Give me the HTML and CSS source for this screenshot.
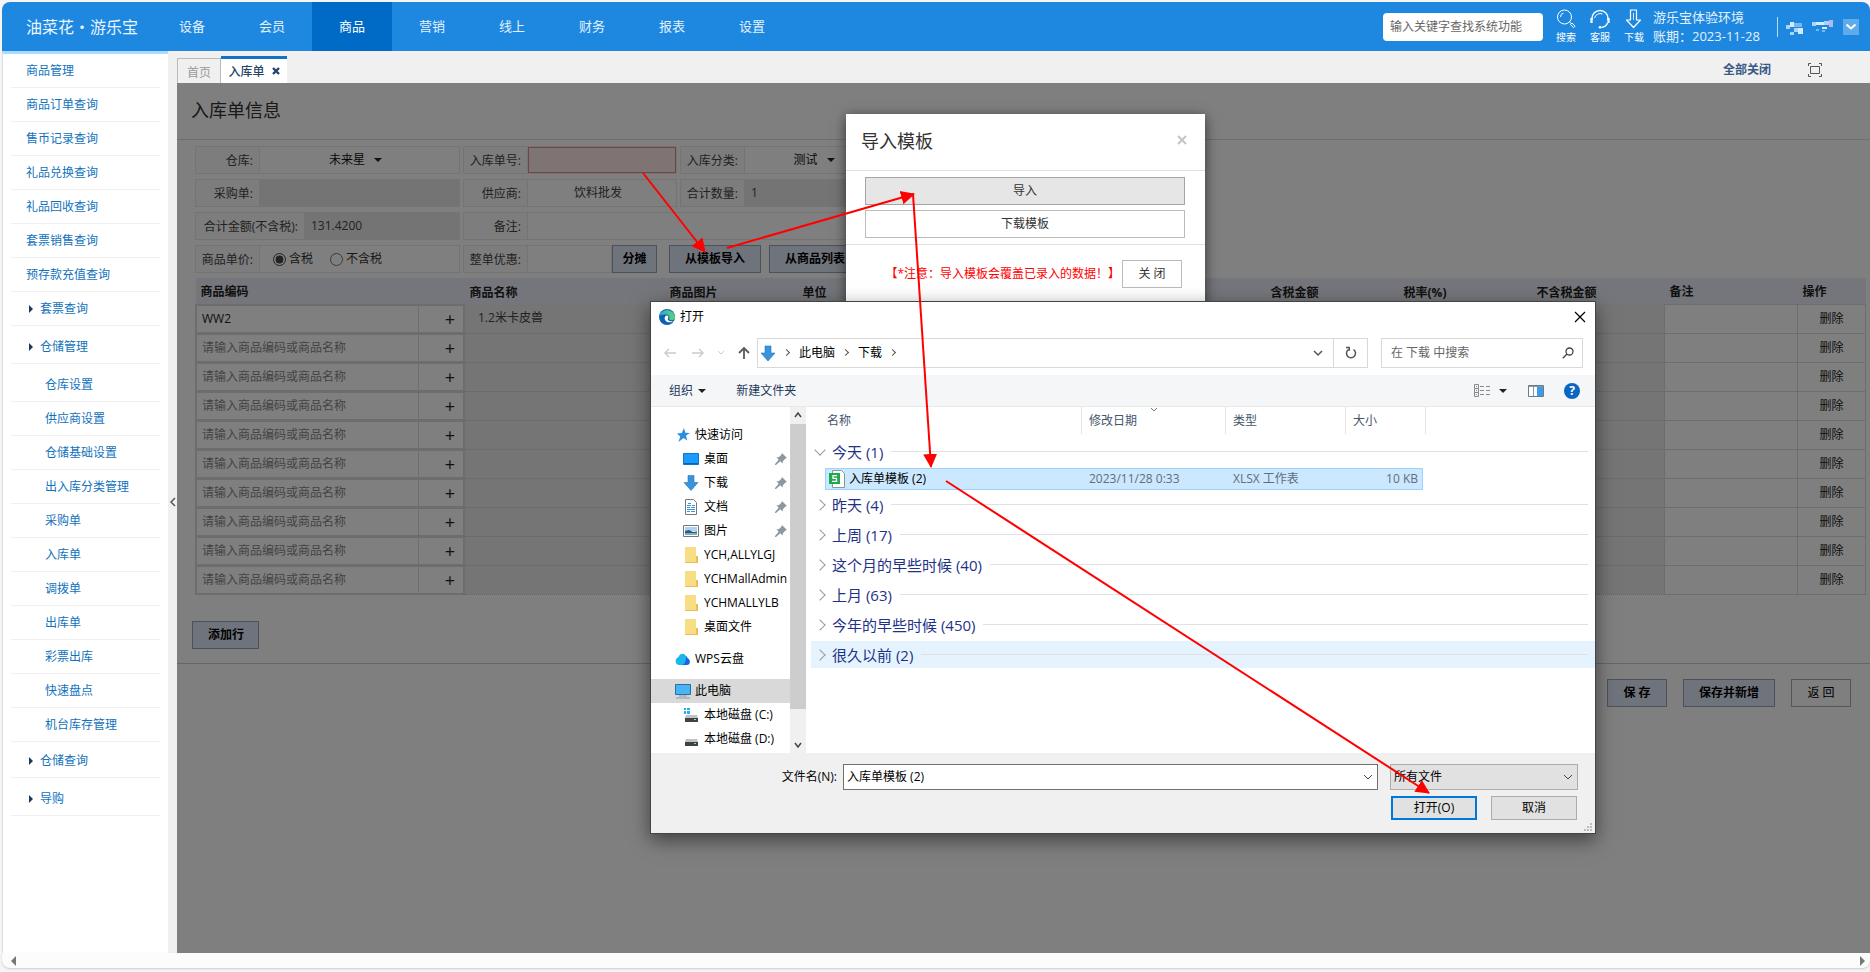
FILE: index.html
```html
<!DOCTYPE html>
<html lang="zh-CN">
<head>
<meta charset="utf-8">
<title>入库单</title>
<link rel="stylesheet" href="styles.css">
</head>
<body>
<div class="app">
  <header class="topbar">
    <div class="brand">油菜花・游乐宝</div>
    <nav class="nav">
      <a href="#">设备</a><a href="#">会员</a><a href="#" class="on">商品</a><a href="#">营销</a><a href="#">线上</a><a href="#">财务</a><a href="#">报表</a><a href="#">设置</a>
    </nav>
    <input class="top-search" type="text" placeholder="输入关键字查找系统功能" aria-label="查找系统功能">
    <div class="tools">
      <button class="tool"><svg width="20" height="20" viewBox="0 0 20 20" fill="none" stroke="#fff"><circle cx="8.5" cy="8" r="7"/><path d="M4.5 8a4 4 0 0 1 3-4"/><path d="M13.5 13l1.5 1.2M14.5 15.5l1.5-1.5 3 3.2-1.5 1.5z"/></svg>搜索</button>
      <button class="tool"><svg width="20" height="20" viewBox="0 0 20 20" fill="none" stroke="#fff" stroke-width="1.4"><path d="M2 11V9.500a8 8 0 0 1 16 0V11"/><path d="M4.500 9a6 6 0 0 1 8-4" stroke-width="1"/><path d="M1.500 9v5M18.500 9v5" stroke-width="2.200"/><path d="M17.500 14c-1 3-3 4-6 4.500"/><circle cx="10" cy="18.200" r="1.300" fill="#fff" stroke="none"/></svg>客服</button>
      <button class="tool"><svg width="20" height="20" viewBox="0 0 20 20" fill="none" stroke="#fff" stroke-width="1.200"><path d="M6.500 1h6v10h4l-7 7.500-7-7.500h4z" stroke-linejoin="round"/><path d="M9.500 4v7" stroke-width=".8"/></svg>下载</button>
    </div>
    <div class="env"><div>游乐宝体验环境</div><div>账期：2023-11-28</div></div>
    <div class="account">
      <svg width="48" height="18" viewBox="0 0 48 18"><path fill="#a9d5fb" d="M0 7h4v4H0zM8 10h4v4H8zM4 14h4v3H4zM26 4h4v4h-4zM38 3h5v4h-5z"/><path fill="#d6e9fd" d="M4 4h4v5H4zM12 10h5v6h-5zM30 4h8v3h-8zM36 9h5v2h-5z"/><path fill="#74b8f4" d="M8 5h4v4H8zM12 5h4v4h-4zM30 11h3v2h-3zM36 12h3v2h-3z"/><path fill="#b7b5ee" d="M43 2h4v7h-4z"/></svg>
      <button class="more" aria-label="更多"><svg width="16" height="16" viewBox="0 0 16 16" fill="none" stroke="#fff" stroke-width="2"><path d="M3.500 5.500l4.500 4 4.500-4"/></svg></button>
    </div>
  </header>

  <div class="body">
    <aside class="side">
      <a href="#">商品管理</a>
      <a href="#">商品订单查询</a>
      <a href="#">售币记录查询</a>
      <a href="#">礼品兑换查询</a>
      <a href="#">礼品回收查询</a>
      <a href="#">套票销售查询</a>
      <a href="#">预存款充值查询</a>
      <a href="#" class="grp">套票查询</a>
      <a href="#" class="grp gap">仓储管理</a>
      <div class="sub">
        <a href="#" class="gap">仓库设置</a>
        <a href="#">供应商设置</a>
        <a href="#">仓储基础设置</a>
        <a href="#">出入库分类管理</a>
        <a href="#">采购单</a>
        <a href="#">入库单</a>
        <a href="#">调拨单</a>
        <a href="#">出库单</a>
        <a href="#">彩票出库</a>
        <a href="#">快速盘点</a>
        <a href="#">机台库存管理</a>
      </div>
      <a href="#" class="grp">仓储查询</a>
      <a href="#" class="grp gap">导购</a>
    </aside>
    <div class="gutter"><svg width="6" height="10" viewBox="0 0 6 10" fill="none" stroke="#555" stroke-width="1.500"><path d="M5 1L1 5l4 4"/></svg></div>
    <main class="main">
      <div class="tabs">
        <a href="#" class="tab">首页</a>
        <a href="#" class="tab cur">入库单<svg width="8" height="8" viewBox="0 0 8 8" stroke="#25436b" stroke-width="2.400"><path d="M1 1l6 6M7 1L1 7"/></svg></a>
        <a href="#" class="closeall">全部关闭</a>
        <button class="full" aria-label="全屏"><svg width="14" height="14" viewBox="0 0 14 14" fill="none" stroke="#555"><path d="M2.500 3.500h9v7h-9zM.5 3V.5H3M11 .5h2.500V3M.5 11v2.500H3M11 13.500h2.500V11"/></svg></button>
      </div>
      <div class="content">
        <h1>入库单信息</h1>
        <form class="form">
          <div class="fields">
            <div class="f"><label for="wh">仓库:</label><div class="pick"><select id="wh"><option>未来星</option></select><i class="caret"></i></div></div>
            <div class="f"><label for="no">入库单号:</label><input id="no" class="bad" type="text"></div>
            <div class="f"><label for="cat">入库分类:</label><div class="pick"><select id="cat"><option>测试</option></select><i class="caret"></i></div></div>
            <div class="f"><label for="po">采购单:</label><input id="po" type="text" readonly></div>
            <div class="f"><label for="sup">供应商:</label><input id="sup" class="mid" type="text" value="饮料批发"></div>
            <div class="f"><label for="qty">合计数量:</label><input id="qty" type="text" value="1" readonly></div>
            <div class="f"><label for="amt" class="wide">合计金额(不含税):</label><input id="amt" type="text" value="131.4200" readonly></div>
            <div class="f span"><label for="memo">备注:</label><input id="memo" type="text"></div>
            <div class="f"><label for="tax1">商品单价:</label><div class="radios"><label><input id="tax1" type="radio" name="tax" checked>含税</label><label><input type="radio" name="tax">不含税</label></div></div>
            <div class="f span plain"><div class="f disc"><label for="disc">整单优惠:</label><input id="disc" type="text"></div><button type="button" class="btn share">分摊</button><button type="button" class="btn tpl">从模板导入</button><button type="button" class="btn list">从商品列表</button></div>
          </div>
          <table class="grid">
            <colgroup><col class="c-code"><col class="c-name"><col class="c-std"><col class="c-std"><col><col class="c-std"><col class="c-std"><col class="c-std"><col class="c-std"><col class="c-op"></colgroup>
            <thead><tr><th>商品编码</th><th>商品名称</th><th>商品图片</th><th>单位</th><th></th><th>含税金额</th><th>税率(%)</th><th>不含税金额</th><th>备注</th><th>操作</th></tr></thead>
            <tbody>
              <tr><td><div class="code"><input type="text" value="WW2" aria-label="商品编码"><button type="button">+</button></div></td><td class="ro">1.2米卡皮兽</td><td class="ro"></td><td class="ro"></td><td class="ro"></td><td class="ro"></td><td class="ro"></td><td class="ro"></td><td></td><td><a href="#">删除</a></td></tr>
              <tr><td><div class="code"><input type="text" placeholder="请输入商品编码或商品名称" aria-label="商品编码"><button type="button">+</button></div></td><td class="ro"></td><td class="ro"></td><td class="ro"></td><td class="ro"></td><td class="ro"></td><td class="ro"></td><td class="ro"></td><td></td><td><a href="#">删除</a></td></tr>
              <tr><td><div class="code"><input type="text" placeholder="请输入商品编码或商品名称" aria-label="商品编码"><button type="button">+</button></div></td><td class="ro"></td><td class="ro"></td><td class="ro"></td><td class="ro"></td><td class="ro"></td><td class="ro"></td><td class="ro"></td><td></td><td><a href="#">删除</a></td></tr>
              <tr><td><div class="code"><input type="text" placeholder="请输入商品编码或商品名称" aria-label="商品编码"><button type="button">+</button></div></td><td class="ro"></td><td class="ro"></td><td class="ro"></td><td class="ro"></td><td class="ro"></td><td class="ro"></td><td class="ro"></td><td></td><td><a href="#">删除</a></td></tr>
              <tr><td><div class="code"><input type="text" placeholder="请输入商品编码或商品名称" aria-label="商品编码"><button type="button">+</button></div></td><td class="ro"></td><td class="ro"></td><td class="ro"></td><td class="ro"></td><td class="ro"></td><td class="ro"></td><td class="ro"></td><td></td><td><a href="#">删除</a></td></tr>
              <tr><td><div class="code"><input type="text" placeholder="请输入商品编码或商品名称" aria-label="商品编码"><button type="button">+</button></div></td><td class="ro"></td><td class="ro"></td><td class="ro"></td><td class="ro"></td><td class="ro"></td><td class="ro"></td><td class="ro"></td><td></td><td><a href="#">删除</a></td></tr>
              <tr><td><div class="code"><input type="text" placeholder="请输入商品编码或商品名称" aria-label="商品编码"><button type="button">+</button></div></td><td class="ro"></td><td class="ro"></td><td class="ro"></td><td class="ro"></td><td class="ro"></td><td class="ro"></td><td class="ro"></td><td></td><td><a href="#">删除</a></td></tr>
              <tr><td><div class="code"><input type="text" placeholder="请输入商品编码或商品名称" aria-label="商品编码"><button type="button">+</button></div></td><td class="ro"></td><td class="ro"></td><td class="ro"></td><td class="ro"></td><td class="ro"></td><td class="ro"></td><td class="ro"></td><td></td><td><a href="#">删除</a></td></tr>
              <tr><td><div class="code"><input type="text" placeholder="请输入商品编码或商品名称" aria-label="商品编码"><button type="button">+</button></div></td><td class="ro"></td><td class="ro"></td><td class="ro"></td><td class="ro"></td><td class="ro"></td><td class="ro"></td><td class="ro"></td><td></td><td><a href="#">删除</a></td></tr>
              <tr><td><div class="code"><input type="text" placeholder="请输入商品编码或商品名称" aria-label="商品编码"><button type="button">+</button></div></td><td class="ro"></td><td class="ro"></td><td class="ro"></td><td class="ro"></td><td class="ro"></td><td class="ro"></td><td class="ro"></td><td></td><td><a href="#">删除</a></td></tr>
            </tbody>
          </table>
        </form>
        <div class="addrow"><button class="btn">添加行</button></div>
        <div class="actions"><button class="btn">保 存</button><button class="btn">保存并新增</button><button class="btn light">返 回</button></div>
        <div class="mask"></div>
      </div>
    </main>
  </div>
  <div class="hbar"><i class="left"></i><i class="right"></i></div>
</div>

<section class="modal" role="dialog" aria-label="导入模板">
  <div class="m-head"><h2>导入模板</h2><button aria-label="关闭"><svg width="10" height="10" viewBox="0 0 10 10" stroke="#c4c4c4" stroke-width="2"><path d="M1 1l8 8M9 1L1 9"/></svg></button></div>
  <div class="m-body"><button class="hot">导入</button><button>下载模板</button></div>
  <div class="m-foot"><span>【*注意：导入模板会覆盖已录入的数据！】</span><button>关 闭</button></div>
</section>

<section class="dlg" role="dialog" aria-label="打开">
  <div class="d-title">
    <svg width="16" height="16" viewBox="0 0 16 16"><defs><linearGradient id="eg" x1="0" y1="0" x2="1" y2="0"><stop offset="0" stop-color="#2aa6dd"/><stop offset="1" stop-color="#5fd668"/></linearGradient></defs><circle cx="8" cy="8" r="8" fill="#0f5fb4"/><path fill="url(#eg)" d="M.3 7A8 8 0 0 1 16 8c0 2-1.500 3.200-3.500 3.200-1.600 0-2.700-.6-2.400-1.200C11 8.600 10.300 6 7.600 5.600 4 5 1 6.200.3 7z"/><path fill="#fff" d="M7.600 6.500c-1.600.5-2.300 2-1.800 3.700.6 2 3 3.600 6.200 3 .8-.2 1.800-.6 2.500-1.200-1.500.5-4 .5-5.200-.8-.9-1-.4-1.600 0-2.400.3-1-.4-2.400-1.700-2.300z"/></svg>
    <span>打开</span>
    <button aria-label="关闭"><svg width="12" height="12" viewBox="0 0 12 12" stroke="#000" stroke-width="1.200"><path d="M1 1l10 10M11 1L1 11"/></svg></button>
  </div>
  <div class="d-nav">
    <div class="hist">
      <svg width="14" height="12" viewBox="0 0 14 12" fill="none" stroke="#ccc" stroke-width="1.500"><path d="M13 6H2M6 2L2 6l4 4"/></svg>
      <svg width="14" height="12" viewBox="0 0 14 12" fill="none" stroke="#ccc" stroke-width="1.500"><path d="M1 6h11M8 2l4 4-4 4"/></svg>
      <svg width="6" height="6" viewBox="0 0 6 6" fill="none" stroke="#ccc"><path d="M0 1l3 3 3-3"/></svg>
      <svg width="12" height="14" viewBox="0 0 12 14" fill="none" stroke="#5a5a5a" stroke-width="1.800"><path d="M6 13V2M1 7l5-5 5 5"/></svg>
    </div>
    <div class="addr">
      <svg width="16" height="16" viewBox="0 0 16 16"><path fill="#3a94dc" stroke="#2375bf" stroke-width=".6" d="M5 1h6v7h4l-7 8-7-8h4z"/></svg>
      <i class="sep"></i><span>此电脑</span><i class="sep"></i><span>下载</span><i class="sep"></i>
      <svg class="down" width="10" height="8" viewBox="0 0 10 8" fill="none" stroke="#555" stroke-width="1.500"><path d="M1 2l4 4 4-4"/></svg>
      <button aria-label="刷新"><svg width="12" height="14" viewBox="0 0 12 14" fill="none" stroke="#555" stroke-width="1.500"><path d="M8.500 3.500A4.500 4.500 0 1 1 3.500 3.500M1 1.500h3.200v3.200"/></svg></button>
    </div>
    <div class="find"><input type="text" placeholder="在 下载 中搜索" aria-label="搜索"><svg width="12" height="12" viewBox="0 0 12 12" fill="none" stroke="#444" stroke-width="1.300"><circle cx="7.500" cy="4.500" r="3.500"/><path d="M5 7L.8 11.200"/></svg></div>
  </div>
  <div class="d-tool">
    <button>组织 <i class="caret"></i></button><button>新建文件夹</button>
    <div class="views">
      <svg width="16" height="14" viewBox="0 0 16 14" fill="none" stroke="#8a8a8a"><path d="M.5.5h4v4h-4zM.5 4.500h4v4h-4zM.5 8.500h4v4h-4zM2 2.500h1M2 6.500h1M2 10.500h1"/><path d="M6 2.500h4M6 6.500h4M6 10.500h4M12 2.500h4M12 6.500h4M12 10.500h4"/></svg>
      <i class="caret"></i>
      <svg width="16" height="12" viewBox="0 0 16 12"><path fill="#fff" stroke="#6b7b88" d="M.5.5h15v11H.5z"/><path fill="#8a98a3" d="M1 1h14v1H1zM5 2h1v9H5z"/><path fill="#3d9be9" d="M9 2h6v9H9z"/></svg>
      <button class="help" aria-label="帮助">?</button>
    </div>
  </div>
  <div class="d-body">
    <div class="tree">
      <div class="n"><svg width="16" height="16" viewBox="0 0 16 16"><path fill="#2b8fdd" d="M9 1l1.300 4.700 4.700.3-4 2.600 1.200 5L8.500 11 3.500 15l1.700-5.500L2 6.500l4.800-.6z"/></svg>快速访问</div>
      <div class="n l2"><svg width="16" height="16" viewBox="0 0 16 16"><path fill="#1a9bff" stroke="#1076c8" d="M.5 2.500h15v11H.5z"/><path fill="#0b62b0" d="M1 12h14v1H1z"/></svg>桌面<svg class="pin" width="12" height="12" viewBox="0 0 12 12"><path fill="#8e979e" d="M7 0l5 5-1.500.5L8 8l-.5 2.500-2.200-2.200L1 12H0v-1l3.700-4.300L1.500 4.500 4 4l2.500-2.500z"/></svg></div>
      <div class="n l2"><svg width="16" height="16" viewBox="0 0 16 16"><path fill="#3a94dc" stroke="#2375bf" stroke-width=".6" d="M5 .5h6v7h4l-7 8-7-8h4z"/></svg>下载<svg class="pin" width="12" height="12" viewBox="0 0 12 12"><path fill="#8e979e" d="M7 0l5 5-1.500.5L8 8l-.5 2.500-2.200-2.200L1 12H0v-1l3.700-4.300L1.500 4.500 4 4l2.500-2.500z"/></svg></div>
      <div class="n l2"><svg width="16" height="16" viewBox="0 0 16 16"><path fill="#fff" stroke="#777" d="M2.500.5h8l3 3v12h-11z"/><path stroke="#3a94dc" d="M5 4.500h3M9 6.500h3M4 6.500h4M4 8.500h3M8 8.500h4M4 10.500h8M4 12.500h3M8 12.500h4"/></svg>文档<svg class="pin" width="12" height="12" viewBox="0 0 12 12"><path fill="#8e979e" d="M7 0l5 5-1.500.5L8 8l-.5 2.500-2.200-2.200L1 12H0v-1l3.700-4.300L1.500 4.500 4 4l2.500-2.500z"/></svg></div>
      <div class="n l2"><svg width="16" height="16" viewBox="0 0 16 16"><path fill="#fff" stroke="#777" d="M.5 2.500h15v11H.5z"/><path fill="#a9d4f2" d="M2 4h12v4H2z"/><path fill="#31597a" d="M2 8l4-1 4 2 4-.5V12H2z"/><path fill="#79b0c9" d="M2 10h12v2H2z"/></svg>图片<svg class="pin" width="12" height="12" viewBox="0 0 12 12"><path fill="#8e979e" d="M7 0l5 5-1.500.5L8 8l-.5 2.500-2.200-2.200L1 12H0v-1l3.700-4.300L1.500 4.500 4 4l2.500-2.500z"/></svg></div>
      <div class="n l2"><svg width="16" height="16" viewBox="0 0 16 16"><path fill="#f9dd84" d="M2 0h11v16H2z"/><path fill="#e8bf55" d="M13 9h2v7h-2zM2 15h13v1H2z"/></svg>YCH,ALLYLGJ</div>
      <div class="n l2"><svg width="16" height="16" viewBox="0 0 16 16"><path fill="#f9dd84" d="M2 0h11v16H2z"/><path fill="#e8bf55" d="M13 9h2v7h-2zM2 15h13v1H2z"/></svg>YCHMallAdmin</div>
      <div class="n l2"><svg width="16" height="16" viewBox="0 0 16 16"><path fill="#f9dd84" d="M2 0h11v16H2z"/><path fill="#e8bf55" d="M13 9h2v7h-2zM2 15h13v1H2z"/></svg>YCHMALLYLB</div>
      <div class="n l2"><svg width="16" height="16" viewBox="0 0 16 16"><path fill="#f9dd84" d="M2 0h11v16H2z"/><path fill="#e8bf55" d="M13 9h2v7h-2zM2 15h13v1H2z"/></svg>桌面文件</div>
      <div class="n top"><svg width="16" height="16" viewBox="0 0 16 16"><path fill="#18b8ee" d="M4 14a4 4 0 0 1-2-7c1-.5 1.500-1 2-2C5.500 2.500 9 1.500 11 5l1 6-3 3z"/><path fill="#1766e0" d="M7 14c3-1 4-4 4-9 1 .5 1.300 1.500 1.700 2.200C16 9 15.500 14 12 14z"/></svg>WPS云盘</div>
      <div class="n top sel"><svg width="16" height="16" viewBox="0 0 16 16"><path fill="#46b4f5" stroke="#2c6d9c" d="M.5 1.500h15v10H.5z"/><path fill="#8a9aa6" d="M4 12.500h8v1H4zM1 14.500h14v1H1z"/></svg>此电脑</div>
      <div class="n l2"><svg width="16" height="16" viewBox="0 0 16 16"><path fill="#22b2ea" d="M1 1h2v2H1zM4 1h3v2H4zM1 4h2v3H1zM4 4h3v3H4z"/><path fill="#bfc3c6" d="M3 8h11l1 3H2z"/><path fill="#3f4346" d="M2 11h13v4H2z"/><path fill="#8de08d" d="M11 12h2v1h-2z"/></svg>本地磁盘 (C:)</div>
      <div class="n l2"><svg width="16" height="16" viewBox="0 0 16 16"><path fill="#bfc3c6" d="M3 8h11l1 3H2z"/><path fill="#3f4346" d="M2 11h13v4H2z"/><path fill="#8de08d" d="M11 12h2v1h-2z"/></svg>本地磁盘 (D:)</div>
    </div>
    <div class="vbar"><svg width="8" height="6" viewBox="0 0 8 6" fill="none" stroke="#444" stroke-width="1.500"><path d="M1 5l3-4 3 4"/></svg><i></i><svg width="8" height="6" viewBox="0 0 8 6" fill="none" stroke="#444" stroke-width="1.500"><path d="M1 1l3 4 3-4"/></svg></div>
    <div class="files">
      <div class="heads"><span>名称</span><span>修改日期<svg width="8" height="4" viewBox="0 0 8 4" fill="none" stroke="#777"><path d="M1 0l3 3 3-3"/></svg></span><span>类型</span><span>大小</span></div>
      <div class="g open">今天 (1)</div>
      <div class="file"><span><svg width="16" height="18" viewBox="0 0 16 18"><path fill="#fff" stroke="#8a9a8f" d="M3.500.5h9l3 3v14h-12z"/><path fill="#1fa84f" d="M0 3h11v11H0z"/><path fill="none" stroke="#fff" stroke-width="1.300" d="M8 5.700H4v2.600h3.500v3H3"/></svg>入库单模板 (2)</span><span>2023/11/28 0:33</span><span>XLSX 工作表</span><span>10 KB</span></div>
      <div class="g">昨天 (4)</div>
      <div class="g">上周 (17)</div>
      <div class="g">这个月的早些时候 (40)</div>
      <div class="g">上月 (63)</div>
      <div class="g">今年的早些时候 (450)</div>
      <div class="g hov">很久以前 (2)</div>
    </div>
  </div>
  <div class="d-foot">
    <div class="row"><label for="fn">文件名(N):</label><div class="combo name"><input id="fn" type="text" value="入库单模板 (2)"><svg width="10" height="6" viewBox="0 0 10 6" fill="none" stroke="#444"><path d="M1 1l4 4 4-4"/></svg></div><div class="combo type"><select aria-label="文件类型"><option>所有文件</option></select><svg width="10" height="6" viewBox="0 0 10 6" fill="none" stroke="#444"><path d="M1 1l4 4 4-4"/></svg></div></div>
    <div class="row btns"><button class="pri">打开(O)</button><button>取消</button></div>
    <svg class="grip" width="9" height="9" viewBox="0 0 9 9" fill="#bbb"><path d="M6 0h2v2H6zM3 3h2v2H3zM6 3h2v2H6zM0 6h2v2H0zM3 6h2v2H3zM6 6h2v2H6z"/></svg>
  </div>
</section>

<svg class="arrows" width="1870" height="972" viewBox="0 0 1870 972" aria-hidden="true">
  <defs><marker id="ah" markerUnits="userSpaceOnUse" markerWidth="16" markerHeight="16" refX="13" refY="8" orient="auto"><path fill="#f00" d="M0 1l14 7-14 7z"/></marker></defs>
  <g stroke="#f00" stroke-width="2">
    <path marker-end="url(#ah)" d="M643 173L705 252"/><path marker-end="url(#ah)" d="M727 248L914 194"/><path marker-end="url(#ah)" d="M913 194L931 467"/><path marker-end="url(#ah)" d="M946 481L1429 793"/>
  </g>
</svg>
</body>
</html>
```
FILE: styles.css
```css
* { box-sizing: border-box; }
body {
  margin: 0;
  background: #f5f5f5;
  font: 12px/16px "Open Sans", "Noto Sans CJK SC", sans-serif;
  color: #333;
  overflow: hidden;
}
button, input, select { font: inherit; color: inherit; border-radius: 0; margin: 0; }
button { padding: 0; border: 0; background: none; cursor: pointer; white-space: nowrap; }
input { min-width: 0; outline: 0; }
select { appearance: none; border: 0; background: none; padding: 0; }
a { color: inherit; text-decoration: none; }
h1, h2 { margin: 0; font-weight: 400; font-size: 18px; line-height: 24px; }
svg { flex: none; }

.app { display: flex; flex-direction: column; height: 100vh; padding: 2px 0 4px 2px; }

/* top bar */
.topbar {
  display: flex; align-items: center; flex: none; height: 49px;
  background: #1e88e1; color: #fff; border-radius: 8px 8px 0 0; font-size: 13px;
}
.brand { width: 150px; padding-left: 24px; font-size: 16px; color: #e9f5ff; white-space: nowrap; }
.nav { display: flex; align-self: stretch; flex: 1; }
.nav a { width: 80px; line-height: 48px; text-align: center; color: #e3f1fd; }
.nav .on { background: #006bc7; color: #fff; }
.top-search { width: 160px; height: 28px; padding: 0 7px; border: 0; border-radius: 4px; background: #fff; font-size: 12px; }
.top-search::placeholder { color: #666; }
.tools { display: flex; gap: 12px; margin-left: 12px; }
.tool { display: flex; flex-direction: column; align-items: center; width: 22px; gap: 1px; font-size: 10px; line-height: 14px; }
.env { margin-left: 8px; width: 116px; line-height: 19px; white-space: nowrap; color: #e3f1fd; }
.account { display: flex; align-items: center; gap: 9px; margin: 0 11px 0 8px; padding-left: 8px; border-left: 1px solid #b5dafa; height: 20px; }
.more { background: #5eabeb; width: 16px; height: 16px; }
.more svg { display: block; }

/* side menu */
.body { display: flex; flex: 1; min-height: 0; }
.side { width: 166px; flex: none; background: #fff; border-top: 3px solid #a9dcfc; border-left: 1px solid #ddd; padding: 0 8px; }
.side a { display: block; height: 34px; padding-left: 15px; line-height: 33px; border-bottom: 1px solid #f0f0f0; color: #1272bd; }
.side .gap { height: 38px; padding-top: 4px; }
.sub { padding-bottom: 2px; }
.side .sub a { padding-left: 34px; }
.side .grp { display: flex; gap: 7px; padding-left: 18px; }
.grp::before { content: ""; align-self: center; border: 4px solid transparent; border-left: 4px solid #1c3a5e; border-right: 0; }
.gutter { width: 9px; flex: none; display: flex; align-items: center; justify-content: center; background: #f0f0f0; }

/* tabs */
.main { flex: 1; min-width: 0; display: flex; flex-direction: column; }
.tabs { display: flex; align-items: flex-end; height: 32px; flex: none; background: #f0f0f0; }
.tab { height: 25px; width: 44px; border: 1px solid #bbb; border-bottom: 0; text-align: center; line-height: 27px; color: #999; }
.tab.cur { display: flex; align-items: center; justify-content: center; gap: 7px; width: 66px; height: 27px; border: 0; border-top: 3px solid #1173c7; background: #fff; color: #25436b; font-weight: 500; }
.closeall { margin-left: auto; margin-right: 37px; padding-bottom: 5px; color: #3a5a86; font-weight: 700; }
.full { margin-right: 48px; padding-bottom: 6px; line-height: 0; }

/* form */
.content { position: relative; flex: 1; min-height: 0; background: #fff; }
.mask { position: absolute; inset: 0; background: rgba(0, 0, 0, .5); }
.content h1 { height: 57px; padding: 15px 14px; border-bottom: 1px solid #ddd; }
.form { padding: 6px 4px 0 18px; }
.fields { display: grid; grid-template-columns: 265px 214px 212px; gap: 5px 3px; }
.f { display: flex; height: 28px; border: 1px solid #e8e8e8; background: #fafafa; }
.f > label { width: 64px; flex: none; text-align: right; padding-right: 6px; line-height: 28px; white-space: nowrap; color: #444; border-right: 1px solid #e8e8e8; }
.f > .wide { width: 109px; }
.f > input { flex: 1; border: 0; background: #fff; padding: 0 6px; color: #444; }
.f > input[readonly] { background: #e8e8e8; }
.f > .bad { background: #ffe8e8; border: 1px solid #e08a8a; }
.f > .mid { padding: 0 14px 0 6px; text-align: center; }
.span { grid-column: span 2; }
.plain { border: 0; background: none; }
.pick { flex: 1; display: flex; align-items: center; justify-content: center; gap: 8px; padding-right: 8px; background: #fff; color: #111; }
.caret { display: inline-block; border: 4px solid transparent; border-top: 4px solid #222; border-bottom: 0; vertical-align: 2px; }
.radios { flex: 1; display: flex; gap: 17px; padding-left: 13px; background: #fff; }
.radios label { display: flex; align-items: center; gap: 3px; }
.radios input { width: 13px; height: 13px; accent-color: #444; }
.disc { width: 149px; }
.btn { height: 28px; border: 1px solid #9aa3b5; background: #dfe7f7; color: #000; font-weight: 700; padding: 0 15px; }
.share { width: 45px; padding: 0; }
.tpl { width: 92px; margin-left: 12px; padding: 0; }
.list { width: 92px; margin-left: 8px; padding: 0; }
.btn.light { background: #fff; border-color: #aaa; font-weight: 400; }
.grid { width: 100%; margin-top: 5px; table-layout: fixed; border-collapse: collapse; }
.c-code { width: 269px; } .c-name { width: 200px; } .c-std { width: 133px; } .c-op { width: 68px; }
.grid th { height: 26px; padding: 3px 4px 0 5px; background: #e9edf7; text-align: left; color: #222; }
.grid td { height: 29px; padding: 0; border: 1px solid #dadada; text-align: center; color: #222; }
.grid td.ro { background: #ebebeb; text-align: left; padding-left: 13px; border: 0; border-bottom: 1px dotted #c4c4c4; color: #444; }
.code { display: flex; height: 28px; border: 1px solid #dadada; }
.code input { flex: 1; border: 0; padding: 0 5px; background: #fff; }
.code input::placeholder { color: #888; }
.code button { width: 45px; padding-left: 18px; border-left: 1px solid #dadada; font-size: 18px; background: #fff; }
.addrow { padding: 26px 15px 14px; border-bottom: 1px solid #ccc; }
.addrow .btn { width: 67px; }
.actions { display: flex; justify-content: flex-end; gap: 16px; padding: 15px 19px; }
.actions .btn { min-width: 60px; }

.hbar { display: flex; align-items: center; justify-content: space-between; flex: none; height: 15px; padding: 0 5px 0 9px; background: #fcfcfc; border-radius: 0 0 8px 8px; box-shadow: 0 1px 2px #ccc; }
.hbar i { border: 5px solid transparent; }
.hbar .left { border-left: 0; border-right-color: #777; }
.hbar .right { border-right: 0; border-left-color: #777; }

/* import modal */
.modal { position: absolute; left: 846px; top: 114px; width: 359px; background: #fff; box-shadow: 0 3px 12px rgba(0, 0, 0, .6); }
.m-head { display: flex; align-items: center; justify-content: space-between; height: 57px; padding: 0 18px 2px 15px; border-bottom: 1px solid #e0e0e0; }
.m-body { display: flex; flex-direction: column; gap: 5px; padding: 6px 20px 6px 19px; border-bottom: 1px solid #e0e0e0; }
.modal .m-body button, .m-foot button { height: 28px; border: 1px solid #bbb; background: #fff; }
.modal .m-body .hot { background: #e6e6e6; border-color: #a5a5a5; }
.m-foot { display: flex; justify-content: flex-end; align-items: center; gap: 2px; padding: 15px 23px 20px 0; }
.m-foot span { color: #f00; white-space: nowrap; }
.m-foot button { width: 60px; }

/* file dialog */
.dlg { position: absolute; left: 650px; top: 301px; width: 946px; background: #fff; border: 1px solid #444; color: #000; box-shadow: 0 6px 18px rgba(0, 0, 0, .5); }
.d-title { display: flex; align-items: center; gap: 5px; height: 30px; padding: 0 9px 0 8px; }
.d-title button { margin-left: auto; line-height: 0; }
.d-nav { display: flex; align-items: center; height: 43px; padding: 0 12px 2px 12px; }
.hist { display: flex; align-items: center; justify-content: space-between; width: 87px; margin-right: 7px; }
.addr { display: flex; align-items: center; flex: 1; height: 30px; padding-left: 2px; border: 1px solid #d9d9d9; }
.sep { width: 5px; height: 5px; margin: 0 10px 0 8px; border: solid #555; border-width: 1px 1px 0 0; transform: rotate(45deg); }
.addr .down { margin-left: auto; }
.addr button { width: 34px; height: 28px; margin-left: 10px; border-left: 1px solid #d9d9d9; }
.addr button svg { display: block; margin: auto; }
.find { display: flex; align-items: center; width: 202px; height: 30px; margin-left: 13px; padding: 0 8px 0 9px; border: 1px solid #d9d9d9; }
.find input { flex: 1; border: 0; padding: 0; }
.find input::placeholder { color: #666; }
.d-tool { display: flex; align-items: center; gap: 30px; height: 32px; padding: 0 15px 0 18px; background: #f5f6f7; border-bottom: 1px solid #e6e8ea; color: #1e395b; }
.d-tool .caret { margin-left: 2px; }
.views { display: flex; align-items: center; margin-left: auto; }
.views .caret { margin: 0 21px 0 9px; }
.help { width: 16px; height: 16px; margin-left: 20px; border-radius: 50%; background: #0a66c2; color: #fff; font-weight: 700; }
.d-body { display: flex; height: 346px; }
.tree { width: 139px; flex: none; overflow: hidden; padding-top: 16px; }
.n { display: flex; align-items: center; gap: 4px; height: 24px; padding-left: 24px; white-space: nowrap; }
.l2 { padding-left: 32px; gap: 5px; }
.top { margin-top: 8px; }
.sel { background: #d9d9d9; }
.pin { margin: 0 3px 0 auto; }
.vbar { display: flex; flex-direction: column; align-items: center; width: 16px; padding: 5px 0 5px; background: #f0f0f0; gap: 6px; }
.vbar i { width: 16px; height: 285px; background: #cdcdcd; }
.vbar svg:last-child { margin-top: auto; }
.files { flex: 1; padding-left: 5px; }
.heads { display: flex; height: 27px; padding-left: 13px; line-height: 28px; color: #44566c; }
.heads span { position: relative; width: 144px; padding-left: 7px; border-right: 1px solid #e3e3e3; }
.heads span:first-child { width: 258px; padding-left: 3px; }
.heads span:nth-child(3) { width: 120px; }
.heads span:nth-child(4) { width: 80px; }
.heads svg { position: absolute; left: 68px; top: 1px; }
.g { display: flex; align-items: center; gap: 8px; height: 27px; margin-bottom: 3px; padding-right: 7px; font-size: 15px; line-height: 20px; color: #1e3287; white-space: nowrap; }
.g::before { content: ""; width: 7px; height: 7px; margin: 0 0 0 5px; border: solid #999; border-width: 1px 1px 0 0; transform: rotate(45deg); }
.g::after { content: ""; flex: 1; height: 1px; background: #dfe1e4; }
.g.open { margin: 4px 0 3px; }
.g.open::before { transform: rotate(135deg); margin: 0 0 4px 5px; }
.hov { background: #e5f3ff; margin-bottom: 0; }
.file { display: flex; align-items: center; width: 598px; height: 22px; margin: 0 0 1px 14px; padding: 0 4px 0 3px; background: #cce8ff; border: 1px solid #99d1ff; color: #5f6d7c; }
.file span { width: 144px; }
.file span:first-child { display: flex; align-items: center; gap: 4px; width: 260px; color: #000; }
.file span:nth-child(3) { width: 120px; }
.file span:last-child { flex: 1; text-align: right; }
.d-foot { position: relative; padding: 11px 17px 13px 0; background: #f0f0f0; }
.row { display: flex; align-items: center; justify-content: flex-end; }
.row label { margin-right: 6px; }
.combo { display: flex; align-items: center; height: 26px; padding: 0 4px 0 3px; border: 1px solid #707070; background: #fff; }
.combo input, .combo select { flex: 1; border: 0; padding: 0; background: none; }
.name { width: 535px; }
.type { width: 188px; margin-left: 12px; border-color: #adadad; background: #e1e1e1; }
.btns { gap: 14px; margin-top: 6px; padding-right: 1px; }
.btns button { width: 86px; height: 24px; border: 1px solid #adadad; background: #e1e1e1; }
.btns .pri { border: 2px solid #0078d7; }
.grip { position: absolute; right: 2px; bottom: 1px; }

.arrows { position: absolute; left: 0; top: 0; pointer-events: none; }
```
